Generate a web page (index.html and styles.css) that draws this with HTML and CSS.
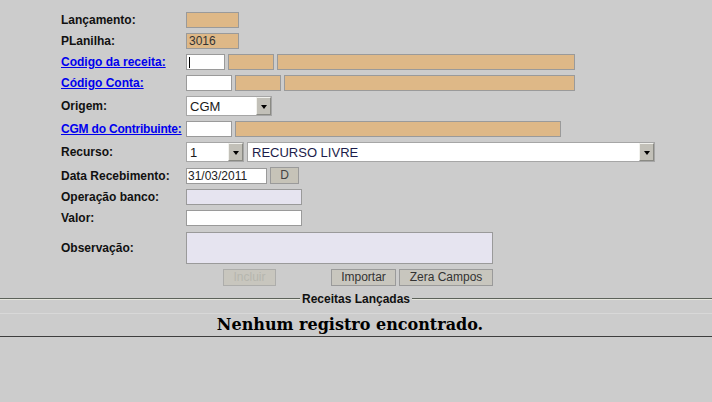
FILE: index.html
```html
<!DOCTYPE html>
<html lang="pt">
<head>
<meta charset="utf-8">
<title>Receitas</title>
<link rel="stylesheet" href="styles.css">
</head>
<body>
<form class="form">
  <span class="lbl">Lançamento:</span>
  <div class="fld"><input class="in ro w53" type="text" readonly></div>

  <span class="lbl">PLanilha:</span>
  <div class="fld"><input class="in ro w53" type="text" value="3016" readonly></div>

  <a class="lbl link" href="#">Codigo da receita:</a>
  <div class="fld"><input class="in caret w39" type="text"><input class="in ro w46" type="text" readonly><input class="in ro w298" type="text" readonly></div>

  <a class="lbl link" href="#">Código Conta:</a>
  <div class="fld"><input class="in w46" type="text"><input class="in ro w46" type="text" readonly><input class="in ro w291" type="text" readonly></div>

  <span class="lbl">Origem:</span>
  <div class="fld">
    <div class="sel w86"><select class="sel-in"><option>CGM</option></select><span class="sel-btn"><i class="tri"></i></span></div>
  </div>

  <a class="lbl link tight" href="#">CGM do Contribuinte:</a>
  <div class="fld"><input class="in w46" type="text"><input class="in ro w326" type="text" readonly></div>

  <span class="lbl">Recurso:</span>
  <div class="fld">
    <div class="sel w58"><select class="sel-in"><option>1</option></select><span class="sel-btn"><i class="tri"></i></span></div>
    <div class="sel w408"><select class="sel-in sel-navy"><option>RECURSO LIVRE</option></select><span class="sel-btn"><i class="tri"></i></span></div>
  </div>

  <span class="lbl">Data Recebimento:</span>
  <div class="fld"><input class="in date w81" type="text" value="31/03/2011"><button class="btn btn-d" type="button">D</button></div>

  <span class="lbl">Operação banco:</span>
  <div class="fld"><input class="in lav w116" type="text"></div>

  <span class="lbl">Valor:</span>
  <div class="fld"><input class="in w116" type="text"></div>

  <span class="lbl">Observação:</span>
  <div class="fld"><textarea class="ta"></textarea></div>

  <span></span>
  <div class="actions">
    <button class="btn btn-incluir" type="button" disabled>Incluir</button>
    <button class="btn btn-importar" type="button">Importar</button>
    <button class="btn btn-zera" type="button">Zera Campos</button>
  </div>
</form>

<div class="legend-row">
  <span class="line"></span>
  <span class="legend">Receitas Lançadas</span>
  <span class="line"></span>
</div>

<div class="results">
  <div class="empty">Nenhum registro encontrado.</div>
</div>
</body>
</html>
```

FILE: styles.css
```css
* { box-sizing: border-box; }

html, body {
  margin: 0;
  padding: 0;
  background: #cccccc;
}

body {
  font-family: "Liberation Sans", Arial, sans-serif;
  font-size: 12px;
  color: #000;
  height: 402px;
  overflow: hidden;
}

.form {
  display: grid;
  grid-template-columns: 125px auto;
  row-gap: 5px;
  align-items: center;
  padding: 12px 0 0 61px;
  margin: 0;
}

.lbl {
  font-weight: bold;
  font-size: 12px;
  line-height: 14px;
  color: #111;
  justify-self: start;
}

.link {
  color: #0000ee;
  text-decoration: underline;
}

.tight { letter-spacing: -0.2px; }

.fld {
  display: flex;
  align-items: center;
  gap: 3px;
}

.in {
  height: 16px;
  margin: 0;
  padding: 0 2px;
  border: 1px solid #9a9a9a;
  background: #ffffff;
  font: 12px "Liberation Sans", Arial, sans-serif;
  color: #333;
  outline: none;
}

.ro { background: #deb887; }
.lav { background: #e6e4f0; }
.date { padding: 0 1px; color: #222; }

.caret {
  background: linear-gradient(#000, #000) no-repeat 2px 2px / 1px 11px, #ffffff;
}

.w39 { width: 39px; }
.w46 { width: 46px; }
.w53 { width: 53px; }
.w58 { width: 58px; }
.w81 { width: 81px; }
.w86 { width: 86px; }
.w116 { width: 116px; }
.w291 { width: 291px; }
.w298 { width: 298px; }
.w326 { width: 326px; }
.w408 { width: 408px; }

.sel {
  display: flex;
  height: 20px;
  border: 1px solid #a6a6a6;
  background: #ffffff;
}

.sel-in {
  appearance: none;
  -webkit-appearance: none;
  flex: 1;
  min-width: 0;
  border: none;
  background: transparent;
  margin: 0;
  padding: 0 0 0 3px;
  font: 13px "Liberation Sans", Arial, sans-serif;
  color: #1a1a1a;
  outline: none;
}

.sel-navy { color: #1c1c4a; padding-left: 4px; }

.sel-btn {
  width: 15px;
  display: flex;
  align-items: center;
  justify-content: center;
  background: #c2c0b8;
  border-top: 1px solid #f2f2ee;
  border-left: 1px solid #f2f2ee;
  border-right: 1px solid #8a8a84;
  border-bottom: 1px solid #8a8a84;
}

.tri {
  width: 0;
  height: 0;
  border-left: 3px solid transparent;
  border-right: 3px solid transparent;
  border-top: 4px solid #000;
  margin-top: 1px;
}

.btn {
  height: 17px;
  margin: 0;
  padding: 0;
  border: 1px solid #9a9a9a;
  background: #c8c6be;
  font: 12px "Liberation Sans", Arial, sans-serif;
  color: #333;
  line-height: 15px;
}

.btn-d { width: 29px; color: #444; background: #c6c3b8; }

.ta {
  width: 307px;
  height: 32px;
  margin: 1px 0 0 0;
  padding: 2px;
  border: 1px solid #9a9a9a;
  background: #e6e4f0;
  resize: none;
  outline: none;
  font: 12px "Liberation Sans", Arial, sans-serif;
}

.actions {
  display: flex;
  align-items: center;
}

.btn-incluir {
  width: 53px;
  margin-left: 37px;
  color: #b6b6ae;
  border-color: #adadab;
}

.btn-importar {
  width: 65px;
  margin-left: 55px;
}

.btn-zera {
  width: 94px;
  margin-left: 3px;
}

.legend-row {
  display: flex;
  align-items: center;
  height: 14px;
  margin-top: 6px;
}

.line {
  flex: 1;
  height: 2px;
  border-top: 1px solid #5c625a;
  border-bottom: 1px solid #e6e6de;
}

.legend {
  padding: 0 2px;
  font-weight: bold;
  font-size: 12px;
  line-height: 14px;
  color: #111;
}

.results {
  margin-top: 7px;
  border-top: 1px solid #d8d8d8;
  border-bottom: 1px solid #3e3e3e;
}

.empty {
  height: 22px;
  line-height: 22px;
  padding-right: 12px;
  text-align: center;
  font-family: "DejaVu Serif", serif;
  font-weight: bold;
  font-size: 16px;
  color: #000;
}
```
